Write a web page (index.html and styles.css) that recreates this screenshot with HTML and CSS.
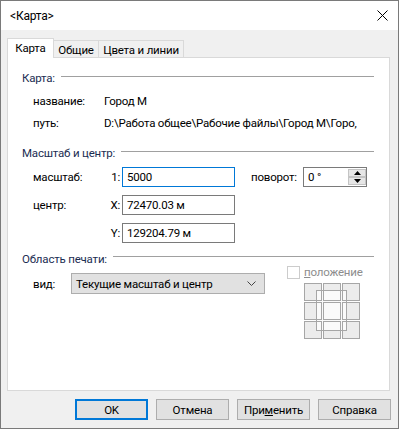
FILE: index.html
```html
<!DOCTYPE html>
<html lang="ru">
<head>
<meta charset="utf-8">
<title>Карта</title>
<link rel="stylesheet" href="styles.css">
</head>
<body>
<div class="window">
  <div class="titlebar">
    <span class="title">&lt;Карта&gt;</span>
    <svg class="close" width="11" height="11" viewBox="0 0 11 11"><path d="M0.5 0.5 L10.5 10.5 M10.5 0.5 L0.5 10.5" stroke="#000" stroke-width="1" fill="none"/></svg>
  </div>
  <div class="body">
    <div class="tabs">
      <div class="tab active">Карта</div>
      <div class="tab t2">Общие</div>
      <div class="tab t3">Цвета и линии</div>
    </div>
    <div class="panel">
      <div class="group-head g1"><span>Карта:</span><i class="rule"></i></div>
      <div class="info-row r1"><span class="lbl">название:</span><span class="val">Город М</span></div>
      <div class="info-row r2"><span class="lbl">путь:</span><span class="val">D:\Работа общее\Рабочие файлы\Город М\Горо,</span></div>
      <div class="group-head g2"><span>Масштаб и центр:</span><i class="rule"></i></div>
      <div class="field-row f1">
        <span class="lbl">масштаб:</span><span class="pre">1:</span>
        <div class="input focus">5000</div>
        <span class="rot-lbl">поворот:</span>
        <div class="spin">
          <span class="spin-val">0 °</span>
          <div class="spin-btns">
            <span class="sbtn"><svg width="7" height="4" viewBox="0 0 7 4"><path d="M3.5 0 L7 4 L0 4 Z" fill="#000"/></svg></span>
            <span class="sbtn"><svg width="7" height="4" viewBox="0 0 7 4"><path d="M0 0 L7 0 L3.5 4 Z" fill="#000"/></svg></span>
          </div>
        </div>
      </div>
      <div class="field-row f2"><span class="lbl">центр:</span><span class="pre">X:</span><div class="input">72470.03 м</div></div>
      <div class="field-row f3"><span class="lbl"></span><span class="pre">Y:</span><div class="input">129204.79 м</div></div>
      <div class="group-head g3"><span>Область печати:</span><i class="rule"></i></div>
      <div class="print-row">
        <div class="view">
          <span class="lbl">вид:</span>
          <div class="select"><span>Текущие масштаб и центр</span>
            <svg width="9" height="5" viewBox="0 0 9 5"><path d="M0.5 0.5 L4.5 4.5 L8.5 0.5" stroke="#444" stroke-width="1" fill="none"/></svg>
          </div>
        </div>
        <div class="pos">
          <div class="check"><span class="box"></span><span class="check-lbl"><u>п</u>оложение</span></div>
          <svg class="grid" width="57" height="56" viewBox="0 0 57 56">
            <g fill="#ececec" stroke="none">
              <rect x="0" y="0" width="18" height="18"/><rect x="19" y="0" width="18" height="18"/><rect x="38" y="0" width="18" height="18"/>
              <rect x="0" y="19" width="18" height="18"/><rect x="19" y="19" width="18" height="18"/><rect x="38" y="19" width="18" height="18"/>
              <rect x="0" y="38" width="18" height="18"/><rect x="19" y="38" width="18" height="18"/><rect x="38" y="38" width="18" height="18"/>
            </g>
            <rect x="12.5" y="7.5" width="30" height="40" fill="#fafafa" stroke="#a6a6a6"/>
            <g fill="none" stroke="#a6a6a6">
              <rect x="0.5" y="0.5" width="17" height="17"/><rect x="19.5" y="0.5" width="17" height="17"/><rect x="38.5" y="0.5" width="17" height="17"/>
              <rect x="0.5" y="19.5" width="17" height="17"/><rect x="19.5" y="19.5" width="17" height="17"/><rect x="38.5" y="19.5" width="17" height="17"/>
              <rect x="0.5" y="38.5" width="17" height="17"/><rect x="19.5" y="38.5" width="17" height="17"/><rect x="38.5" y="38.5" width="17" height="17"/>
            </g>
          </svg>
        </div>
      </div>
    </div>
    <div class="buttons">
      <button class="btn default">OK</button>
      <button class="btn">Отмена</button>
      <button class="btn">При<u>м</u>енить</button>
      <button class="btn">Справка</button>
    </div>
  </div>
</div>
</body>
</html>
```
FILE: styles.css
```css
* { box-sizing: border-box; }
html, body { margin: 0; padding: 0; background: #fff; }
body {
  font-family: Roboto, "Liberation Sans", sans-serif;
  font-size: 11.5px;
  letter-spacing: -0.2px;
  color: #000;
  white-space: nowrap;
}
.window {
  width: 399px;
  height: 429px;
  border: 1px solid #7a7a7a;
  background: #f0f0f0;
  display: flex;
  flex-direction: column;
}
.titlebar {
  height: 29px;
  background: #fff;
  display: flex;
  align-items: center;
  justify-content: space-between;
  padding: 0 10px 0 9px;
  flex: none;
}
.title { line-height: 16px; font-size: 12px; }
.close { display: block; }

.body {
  padding: 8px 0 0 6px;
  display: flex;
  flex-direction: column;
}
.tabs {
  display: flex;
  align-items: flex-end;
  height: 19px;
}
.tab {
  height: 17px;
  border: 1px solid #d9d9d9;
  border-bottom: none;
  background: #f0f0f0;
  display: flex;
  align-items: center;
  justify-content: center;
  line-height: 14px;
  padding-top: 1px;
}
.tab.active {
  height: 20px;
  width: 47px;
  margin-bottom: -1px;
  background: #fff;
  position: relative;
  z-index: 1;
  padding-top: 0;
  padding-bottom: 2px;
}
.tab.t2 { width: 45px; border-left: none; }
.tab.t3 { width: 85px; border-left: none; }

.panel {
  width: 383px;
  height: 334px;
  background: #fff;
  border: 1px solid #d9d9d9;
  padding: 0 15px 0 14px;
}
.group-head {
  display: flex;
  align-items: center;
  height: 16px;
  color: #1b2d52;
}
.group-head .rule {
  flex: 1;
  height: 1px;
  background: #a0a0a0;
  margin: 0 0 4px 6px;
}
.g1 { margin-top: 12px; }
.g2 { margin-top: 14px; }
.g3 { margin-top: 8px; height: 15px; }

.info-row {
  display: flex;
  align-items: center;
  height: 16px;
  padding-left: 11px;
}
.info-row .lbl { width: 71px; }
.r1 { margin-top: 7px; }
.r2 { margin-top: 6px; }

.field-row {
  display: flex;
  align-items: center;
  height: 20px;
  padding-left: 11px;
}
.f1 { margin-top: 6px; }
.f2, .f3 { margin-top: 8px; }
.field-row .lbl { width: 75px; }
.pre { width: 12px; text-align: right; margin-right: 2px; }
.input {
  width: 113px;
  height: 20px;
  border: 1px solid #7a7a7a;
  padding: 0 4px;
  display: flex;
  align-items: center;
  line-height: 14px;
}
.input.focus { border-color: #0078d7; }
.rot-lbl { margin-left: 16px; width: 52px; }
.spin {
  width: 64px;
  height: 20px;
  border: 1px solid #7a7a7a;
  display: flex;
  align-items: center;
  justify-content: space-between;
  padding-left: 4px;
}
.spin-btns {
  display: flex;
  flex-direction: column;
  width: 18px;
  height: 18px;
  padding: 1px 0;
}
.sbtn {
  flex: 1;
  background: #e6e6e6;
  border: 1px solid #c4c4c4;
  display: flex;
  align-items: center;
  justify-content: center;
}
.sbtn svg { display: block; }

.print-row {
  display: flex;
  align-items: flex-start;
  padding-left: 11px;
}
.view {
  display: flex;
  align-items: center;
  margin-top: 7px;
}
.view .lbl { width: 38px; }
.select {
  width: 194px;
  height: 21px;
  background: #e1e1e1;
  border: 1px solid #adadad;
  display: flex;
  align-items: center;
  justify-content: space-between;
  padding: 0 8px 0 4px;
}
.select svg { display: block; }
.pos {
  margin-left: 22px;
  display: flex;
  flex-direction: column;
}
.check {
  display: flex;
  align-items: center;
  height: 13px;
  gap: 4px;
}
.box {
  width: 13px;
  height: 13px;
  border: 1px solid #cccccc;
  background: #fff;
}
.check-lbl { color: #8d8d8d; line-height: 13px; }
.grid { display: block; margin: 4px 0 0 17px; }

.buttons {
  display: flex;
  justify-content: flex-end;
  gap: 8px;
  margin-top: 8px;
  padding-right: 7px;
}
.btn {
  width: 73px;
  height: 21px;
  background: #e1e1e1;
  border: 1px solid #adadad;
  font-family: inherit;
  font-size: 11.5px;
  letter-spacing: -0.2px;
  color: #000;
  padding: 0;
  margin: 0;
  line-height: 14px;
}
.btn.default { border: 2px solid #0078d7; }
```
